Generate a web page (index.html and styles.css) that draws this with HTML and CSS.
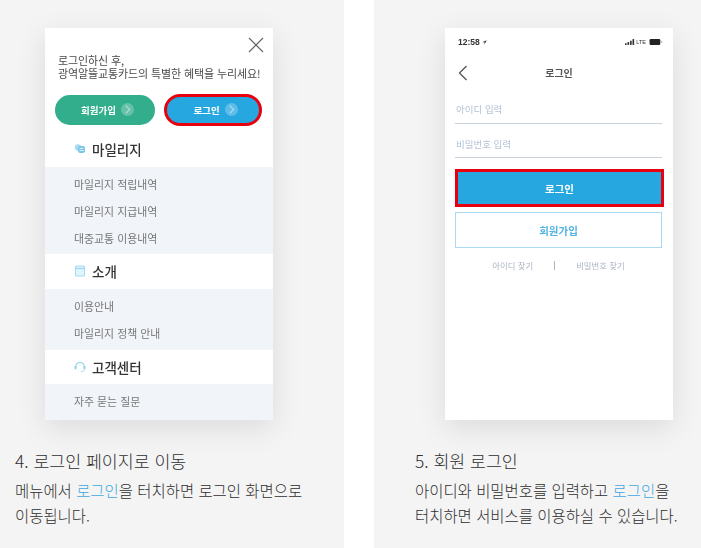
FILE: index.html
```html
<!DOCTYPE html>
<html lang="ko">
<head>
<meta charset="utf-8">
<title>로그인 안내</title>
<link rel="stylesheet" href="styles.css">
</head>
<body>
<div class="page">
  <section class="panel panel-left">
    <div class="phone">
      <div class="phone-inner">
        <div class="close-row">
          <svg class="close" viewBox="0 0 16 16"><path d="M1 1L15 15M15 1L1 15"/></svg>
        </div>
        <p class="welcome">로그인하신 후,<br>광역알뜰교통카드의 특별한 혜택을 누리세요!</p>
        <div class="btn-row">
          <div class="pill pill-green">회원가입<span class="arrow"><svg viewBox="0 0 12 12"><path d="M4.5 2.5L8 6L4.5 9.5"/></svg></span></div>
          <div class="pill pill-blue">로그인<span class="arrow"><svg viewBox="0 0 12 12"><path d="M4.5 2.5L8 6L4.5 9.5"/></svg></span></div>
        </div>
        <h3 class="menu-head head-first">
          <svg class="ico" viewBox="0 0 12 12"><circle cx="4" cy="4.5" r="3.2" fill="#a9dcf2"/><rect x="4" y="3" width="7" height="7" rx="2" fill="#7cc6e8"/><path d="M5.5 5.5h4M5.5 7.5h4" stroke="#d5effa" stroke-width="1"/></svg>마일리지</h3>
        <ul class="menu-list list-a">
          <li>마일리지 적립내역</li>
          <li>마일리지 지급내역</li>
          <li>대중교통 이용내역</li>
        </ul>
        <h3 class="menu-head">
          <svg class="ico" viewBox="0 0 12 12"><rect x="1.5" y="1" width="9" height="10" rx="1" fill="#e3f4fc" stroke="#a5d9f1" stroke-width="1.1"/><path d="M1.5 3.5h9" stroke="#a5d9f1" stroke-width="1.4"/></svg>소개</h3>
        <ul class="menu-list list-b">
          <li>이용안내</li>
          <li>마일리지 정책 안내</li>
        </ul>
        <h3 class="menu-head head-last">
          <svg class="ico" viewBox="0 0 12 12"><path d="M1.8 7V5.5a4.2 4.2 0 0 1 8.4 0V7" fill="none" stroke="#9fd8f2" stroke-width="1.3"/><rect x="0.5" y="5" width="2" height="3.4" rx="1" fill="#8fd0ee"/><rect x="9.5" y="5" width="2" height="3.4" rx="1" fill="#8fd0ee"/><path d="M10.2 8.5c0 1.5-1.5 2.2-3.2 2.2" fill="none" stroke="#9fd8f2" stroke-width="1"/></svg>고객센터</h3>
        <ul class="menu-list list-c">
          <li>자주 묻는 질문</li>
        </ul>
      </div>
    </div>
    <h2 class="cap-title">4. 로그인 페이지로 이동</h2>
    <p class="cap-text">메뉴에서 <span class="link">로그인</span>을 터치하면 로그인 화면으로<br>이동됩니다.</p>
  </section>

  <section class="panel panel-right">
    <div class="phone">
      <div class="phone-inner login">
        <div class="status">
          <span class="time">12:58 <svg class="loc" viewBox="0 0 8 8"><path d="M7.5 .5L.5 3.5H4V7Z"/></svg></span>
          <span class="sys">
            <svg class="signal" viewBox="0 0 12 7"><rect x="0" y="5" width="2" height="2"/><rect x="3" y="3.6" width="2" height="3.4"/><rect x="6" y="2" width="2" height="5"/><rect x="9" y="0" width="2" height="7"/></svg>
            <span class="lte">LTE</span>
            <svg class="battery" viewBox="0 0 15 7"><rect x="0" y="0" width="12.5" height="7" rx="1.5"/><rect x="13.4" y="2.3" width="1.2" height="2.4" fill="#bbb"/></svg>
          </span>
        </div>
        <div class="nav">
          <svg class="back" viewBox="0 0 10 16"><path d="M8.5 1L1.5 8L8.5 15"/></svg>
          <span class="nav-title">로그인</span>
        </div>
        <div class="field field-first">아이디 입력</div>
        <div class="field">비밀번호 입력</div>
        <div class="login-btn">로그인</div>
        <div class="join-btn">회원가입</div>
        <div class="find">
          <span>아이디 찾기</span>
          <i class="find-sep"></i>
          <span>비밀번호 찾기</span>
        </div>
      </div>
    </div>
    <h2 class="cap-title">5. 회원 로그인</h2>
    <p class="cap-text">아이디와 비밀번호를 입력하고 <span class="link">로그인</span>을<br>터치하면 서비스를 이용하실 수 있습니다.</p>
  </section>
</div>
</body>
</html>
```

FILE: styles.css
```css
* { box-sizing: border-box; }
html, body { margin: 0; padding: 0; background: #fff; }
body { font-family: "Noto Sans CJK KR", "Noto Sans", sans-serif; overflow: hidden; }
.page { display: flex; width: 701px; height: 548px; gap: 30px; }
.panel { height: 548px; background: #f4f4f4; padding-top: 28px; }
.panel-left { width: 344px; padding-left: 45px; }
.panel-right { width: 327px; padding-left: 71px; }

.phone { width: 228px; height: 392px; background: #fff; box-shadow: 0 8px 28px rgba(0,0,0,.10); overflow: hidden; }
.phone-inner { height: 392px; filter: blur(.35px); display: flex; flex-direction: column; }

.close-row { display: flex; justify-content: flex-end; padding: 9px 9px 0 0; height: 26px; }
.close { width: 16px; height: 16px; }
.close path { stroke: #666; stroke-width: 1.2; fill: none; }
.welcome { margin: 0; padding-left: 13px; font-size: 11px; line-height: 13.4px; color: #4a4a4a; white-space: nowrap; letter-spacing: -.12px; }
.btn-row { display: flex; gap: 9px; margin: 13px 0 0 10px; align-items: center; }
.pill { display: flex; align-items: center; justify-content: center; gap: 5px; height: 30px; padding-left: 5px; border-radius: 15px; color: #fff; font-size: 9.5px; font-weight: 700; }
.pill-green { width: 100px; background: #32ae8c; }
.pill-blue { width: 98px; height: 32px; border-radius: 16px; background: #27a7e0; border: 3px solid #e8000f; }
.arrow { width: 13px; height: 13px; border-radius: 50%; background: rgba(255,255,255,.25); display: inline-flex; }
.arrow svg { width: 13px; height: 13px; }
.arrow path { fill: none; stroke: rgba(255,255,255,.5); stroke-width: 1; }

.menu-head { margin: 0; height: 35px; padding-left: 29px; display: flex; align-items: center; gap: 6px; font-size: 13.5px; font-weight: 500; color: #333; }
.head-first { height: 41px; padding-top: 5px; }
.head-last { height: 34px; }
.ico { width: 12px; height: 12px; flex: none; }
.menu-list { margin: 0; padding: 3px 0 3px 29px; list-style: none; background: #f1f4f9; font-size: 10.9px; color: #777; }
.menu-list li { height: 27.3px; line-height: 28px; }
.list-a { height: 87px; }
.list-b { height: 61px; }
.list-c { flex: 1; }

.login { padding: 0 10px; }
.status { height: 28px; padding: 0 0 0 3px; display: flex; justify-content: space-between; align-items: center; }
.time { font-family: "Liberation Sans", sans-serif; font-weight: 700; color: #333; font-size: 8.5px; display: flex; align-items: center; gap: 2px; }
.loc { width: 5px; height: 5px; fill: #333; }
.sys { display: flex; align-items: center; gap: 1.5px; }
.signal { width: 10px; height: 6px; fill: #333; }
.lte { font-family: "Liberation Sans", sans-serif; font-size: 5.5px; color: #333; }
.battery { width: 14px; height: 6px; fill: #222; margin-left: 1.5px; }
.nav { height: 36px; padding-bottom: 3px; display: flex; align-items: center; justify-content: center; position: relative; }
.back { position: absolute; left: 3px; top: 9px; width: 10px; height: 16px; }
.back path { fill: none; stroke: #555; stroke-width: 1.3; }
.nav-title { font-size: 10px; font-weight: 700; color: #555; }
.field { width: 207px; height: 34px; padding-left: 1px; border-bottom: 1.5px solid #c9d1dc; font-size: 9.5px; color: #b4c2d6; line-height: 40px; }
.field-first { height: 32px; line-height: 34px; }
.login-btn { width: 209px; height: 38px; margin-top: 11px; border: 3px solid #e8000f; background: #27a7e0; color: #fff; font-size: 10.5px; font-weight: 700; display: flex; align-items: center; justify-content: center; }
.join-btn { width: 207px; height: 36px; margin-top: 5px; border: 1.5px solid #a8daf4; color: #52b3e2; font-size: 10.5px; font-weight: 700; display: flex; align-items: center; justify-content: center; }
.find { width: 207px; display: flex; align-items: center; justify-content: center; gap: 21px; margin-top: 9px; height: 16px; font-size: 8.4px; color: #aab4c2; }
.find-sep { width: 1px; height: 9px; background: #aab4c2; }

.cap-title { margin: 0 0 0 -30px; padding-top: 29px; font-size: 17.3px; line-height: 24px; font-weight: 300; color: #2e2e2e; white-space: nowrap; }
.cap-text { margin: 5px 0 0 -30px; font-size: 15.45px; line-height: 25px; font-weight: 300; color: #2e2e2e; white-space: nowrap; }
.link { color: #3fa8e0; }
```
